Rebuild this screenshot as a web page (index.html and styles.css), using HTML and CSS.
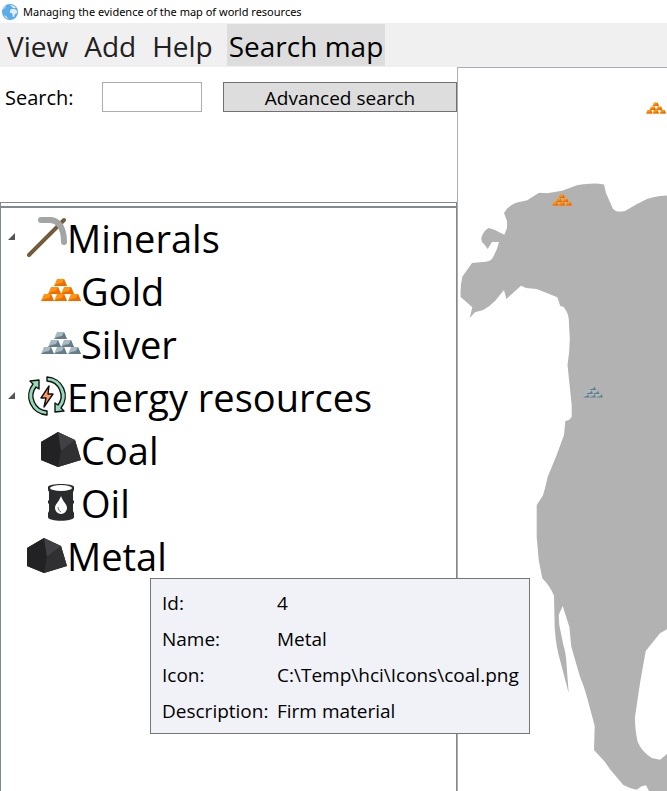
FILE: index.html
```html
<!DOCTYPE html>
<html lang="en">
<head>
<meta charset="utf-8">
<title>Managing the evidence of the map of world resources</title>
<link rel="stylesheet" href="styles.css">
</head>
<body>
<svg class="defs" aria-hidden="true">
  <defs>
    <symbol id="ingots" viewBox="0 0 40 24">
      <g>
        <g id="ingot"><path class="light" d="M0 23 3 16H10L13 23Z"/><path class="dark" d="M0 23 3 21 8 20 10 16 13 23Z"/></g>
        <use href="#ingot" x="13"/>
        <use href="#ingot" x="27"/>
      </g>
      <use href="#ingot" x="7" y="-7"/>
      <use href="#ingot" x="20" y="-7"/>
      <use href="#ingot" x="13" y="-15"/>
    </symbol>
    <symbol id="coal" viewBox="0 0 40 40">
      <path fill="#2c2c2e" d="M0 13 17 3 34 11 40 31 17 38 0 31Z"/>
      <path fill="#222224" d="M0 13 17 3 20 22 17 38 0 31Z"/>
      <path fill="#414145" d="M17 3 34 11 20 22Z"/>
      <path fill="#303032" d="M34 11 40 31 17 38 20 22Z"/>
    </symbol>
  </defs>
</svg>

<header class="title-bar">
  <svg class="globe" viewBox="0 0 16 16" aria-hidden="true">
    <circle cx="8" cy="8" r="8" fill="#5aade9"/>
    <path fill="#e4edf3" d="M8 6 10 5 13 5 15 7 15 9 13 10 12 13 11 13 10 9 8 9ZM8 1 12 2 14 4 11 4 10 3ZM2 11 5 13 6 15 3 13ZM1 5 3 2 4 2 2 5Z"/>
  </svg>
  <h1>Managing the evidence of the map of world resources</h1>
</header>

<nav class="menu">
  <button type="button">View</button>
  <button type="button">Add</button>
  <button type="button">Help</button>
  <button type="button" class="active">Search map</button>
</nav>

<main class="workspace">
  <section class="side">
    <form class="search">
      <label for="query">Search:</label>
      <input id="query" type="text">
      <button type="button">Advanced search</button>
    </form>
    <div class="tree-frame">
      <ul class="tree">
        <li>
          <div class="node">
            <svg class="expander" viewBox="0 0 7 7"><path d="M7 0V7H0Z"/></svg>
            <svg class="icon" viewBox="0 0 40 40"><path d="M2 38 37 3" stroke="#725c3b" stroke-width="4" stroke-linecap="round"/><path d="M14 3H23Q28 3 32 7 37 13 37 25" fill="none" stroke="#a3a4a4" stroke-width="6" stroke-linecap="round"/></svg>
            <span>Minerals</span>
          </div>
          <ul>
            <li class="node"><svg class="icon gold"><use href="#ingots"/></svg><span>Gold</span></li>
            <li class="node"><svg class="icon silver"><use href="#ingots"/></svg><span>Silver</span></li>
          </ul>
        </li>
        <li>
          <div class="node">
            <svg class="expander" viewBox="0 0 7 7"><path d="M7 0V7H0Z"/></svg>
            <svg class="icon" viewBox="0 0 40 40">
              <g fill="#94d9b8" stroke="#111" stroke-width="1.4" stroke-linejoin="round">
                <path id="cycle" d="M20 1A19 19 0 0 1 34 32L37 35 28 36 28 27 31 29A15 15 0 0 0 20 5Z"/>
                <use href="#cycle" transform="rotate(180 20 20)"/>
                <path fill="#ff9868" d="M22 10 14 22H19L17 31 26 18H21Z"/>
              </g>
            </svg>
            <span>Energy resources</span>
          </div>
          <ul>
            <li class="node"><svg class="icon"><use href="#coal"/></svg><span>Coal</span></li>
            <li class="node">
              <svg class="icon" viewBox="0 0 40 40">
                <path fill="#292b2c" d="M7 5C7 1 33 1 33 5V8L32 10V18L33 19V21L32 22V29L33 31V35C33 40 7 40 7 35V31L8 29V22L7 21V19L8 18V10L7 8Z"/>
                <ellipse cx="20" cy="6" rx="11" ry="3" fill="#fff"/>
                <path fill="#fff" d="M20 14C18 20 14 22 14 26A6 6 0 0 0 26 26C26 22 22 20 20 14Z"/>
                <path fill="none" stroke="#777" d="M17 25Q17 29 20 30"/>
              </svg>
              <span>Oil</span>
            </li>
          </ul>
        </li>
        <li class="node"><svg class="icon"><use href="#coal"/></svg><span>Metal</span></li>
      </ul>
    </div>
  </section>

  <section class="map" aria-label="World map">
    <svg class="land" viewBox="458 68 209 723" preserveAspectRatio="xMinYMin slice" aria-hidden="true">
      <path fill="#b2b2b2" d="M667 195.500 660 196Q653 197 647 199L637 204 625 211Q619 212 616 211L613 209 606 193 604 184.500Q597 183 590 183.700 583 184 577 185.300L562 190.700 547 193.300 539 192.700 527.300 200.300 516 202.700Q508 206 504 213L507 221V228L504.300 234.700 495 230 488.700 228Q483 231 481.300 238.300 481 242 484 244L487.700 249 492 242H499Q497 251 491.700 259.300 489 262 485 261.700L472 263 462.300 276.700Q460 287 460.700 297L472.300 307.300 469.700 318 475 312.300 483.300 310Q489 307 495 301L504 290 506.300 299 521 285.700 526 288 536.700 289 557.300 297.300 560.300 306 563.300 306.700Q568 312 568.700 318.300L569.700 337Q570 350 567.500 365L571.700 405V417L569 420 565.300 421 564 435 556.700 455 547.700 476.700Q545 489 542.700 496L536.700 505V537L538.700 560 542.300 578.300Q550 586 554 595.700L554.700 628.300Q556 647 560 660L568.700 693.300 566.700 667Q566 652 563.300 645L559.300 625 558.700 615 562.700 606 569.300 626.700 571.300 646.700 580 676.700Q584 686 587.300 698.300L594.700 726 594 750 605 762 610 769.300 623.300 785 630 788 636.700 789.700 641.700 786.300 646 785.300 649 791H667V754L660 759.700 651.700 758Q641 751 637.700 741.700 635 731 635 717L640 683.300 645.700 651 660 633.300 667 629.300Z"/>
    </svg>
    <svg class="pin gold pin-north"><use href="#ingots"/></svg>
    <svg class="pin gold pin-alaska"><use href="#ingots"/></svg>
    <svg class="pin silver pin-west"><use href="#ingots"/></svg>
  </section>

  <table class="tooltip">
    <tr><th scope="row">Id:</th><td>4</td></tr>
    <tr><th scope="row">Name:</th><td>Metal</td></tr>
    <tr><th scope="row">Icon:</th><td>C:\Temp\hci\Icons\coal.png</td></tr>
    <tr><th scope="row">Description:</th><td>Firm material</td></tr>
  </table>
</main>
</body>
</html>
```
FILE: styles.css
```css
* { box-sizing: border-box; }

body {
  margin: 0;
  min-height: 100vh;
  display: flex;
  flex-direction: column;
  background: #fff;
  color: #000;
  font-family: "Segoe UI", "Open Sans", "Noto Sans", sans-serif;
  font-size: 19px;
}

button, input { font: inherit; color: inherit; border-radius: 0; }
ul { list-style: none; margin: 0; padding: 0; }
.defs { position: absolute; width: 0; height: 0; }

.title-bar {
  display: flex;
  align-items: center;
  gap: 5px;
  height: 23px;
  padding-left: 2px;
}
.title-bar h1 {
  margin: 0;
  font-family: "Segoe UI", "Noto Sans", sans-serif;
  font-size: 11px;
  font-weight: 400;
  white-space: nowrap;
}
.globe { width: 16px; height: 16px; }

.menu {
  display: flex;
  gap: 12px;
  height: 44px;
  padding: 1px 5px;
  background: #f0f0f0;
}
.menu button {
  padding: 2px 2px 0;
  border: 0;
  background: none;
  color: #212121;
  font-size: 28px;
  line-height: 40px;
  white-space: nowrap;
}
.menu .active { background: #ddd; color: #000; }

.workspace {
  position: relative;
  flex: 1;
  display: grid;
  grid-template-columns: 457fr 210fr;
}
.side { display: flex; flex-direction: column; min-width: 0; }

.search {
  display: grid;
  grid-template-columns: 97px 100px 1fr;
  align-items: center;
  height: 135px;
  padding: 15px 0 90px 5px;
}
.search label { padding-top: 2px; font-size: 20px; line-height: 28px; }
.search input { width: 100%; height: 30px; border: 1px solid #abadb3; background: #fff; padding: 0 4px; }
.search button {
  height: 30px;
  margin-left: 21px;
  padding: 2px 0 0;
  border: 1px solid #707070;
  background: #ddd;
  line-height: 26px;
}

.tree-frame {
  flex: 1;
  padding-top: 3px;
  border: 1px solid #828790;
  border-bottom: 0;
}
.tree { border-top: 2px solid #828790; padding-top: 4px; }
.tree ul { padding-left: 14px; }
.node {
  display: flex;
  align-items: center;
  height: 53px;
  padding-left: 26px;
  font-size: 38px;
  line-height: 53px;
  white-space: nowrap;
}
.node .expander { width: 7px; height: 7px; margin: 0 12px 4px -19px; fill: #555; }
.icon { flex: none; width: 40px; height: 40px; margin-bottom: 4px; overflow: visible; }

.gold { color: #ff9413; fill: #ef6c00; }
.silver { color: #a9bac2; fill: #667c86; }
.light { fill: currentColor; }
.dark { fill: inherit; }

.map {
  position: relative;
  min-width: 0;
  overflow: hidden;
  border: solid #abadb3;
  border-width: 1px 0 0 1px;
}
.land { position: absolute; inset: 0; width: 100%; height: 100%; }
.pin { position: absolute; width: 20px; height: 12px; }
.pin-north { left: 188px; top: 34px; }
.pin-alaska { left: 94px; top: 126px; }
.pin-west { left: 125px; top: 318px; }

.tooltip {
  position: absolute;
  left: 150px;
  top: 511px;
  width: 380px;
  padding: 6px 10px 4px 11px;
  border: 1px solid #767676;
  border-spacing: 0;
  background: #f1f2f7;
  line-height: 36px;
  white-space: nowrap;
}
.tooltip th { width: 115px; padding: 0; font-weight: 400; text-align: left; }
.tooltip td { padding: 0; }
```
